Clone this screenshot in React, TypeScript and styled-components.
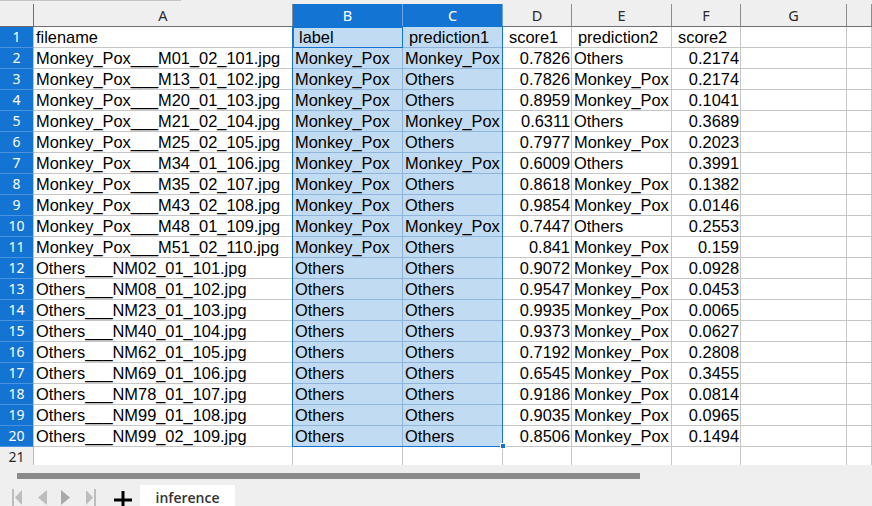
import React from "react";
import styled, { createGlobalStyle } from "styled-components";

const GlobalStyle = createGlobalStyle`
  html, body { margin: 0; padding: 0; background: #efefef; overflow: hidden; }
  * { box-sizing: border-box; }
`;

const BLUE = "#1474d4";
const COLS = [34, 259, 110, 100, 69, 100, 69, 106];

const Window = styled.div`
  width: 872px;
  height: 506px;
  display: flex;
  flex-direction: column;
  background: #efefef;
  overflow: hidden;
`;

const TopStrip = styled.div`
  height: 4px;
  background: #efefef;
`;

const NameBoxEdge = styled.div`
  width: 181px;
  height: 1px;
  background: #c4c4c4;
`;

const Sheet = styled.div`
  position: relative;
  height: 461px;
  overflow: hidden;
  display: grid;
  grid-template-columns: ${COLS.map((c) => c + "px").join(" ")} 1fr;
  grid-template-rows: 23px;
  grid-auto-rows: 21px;
  background: #fff;
`;

const Corner = styled.div`
  background: #efefef;
  border-right: 1px solid #6f6f6f;
  border-bottom: 1px solid #6f6f6f;
`;

const ColHeader = styled.div<{ $selected?: boolean }>`
  background: ${(p) => (p.$selected ? BLUE : "#efefef")};
  color: ${(p) => (p.$selected ? "#fff" : "#2b2b2b")};
  border-right: 1px solid ${(p) => (p.$selected ? "#6aa6e6" : "#8c8c8c")};
  border-bottom: 1px solid ${(p) => (p.$selected ? BLUE : "#6f6f6f")};
  font-family: "Noto Sans", "Open Sans", sans-serif;
  font-size: 14.5px;
  line-height: 22px;
  text-align: center;
`;

const RowHeader = styled.div<{ $selected?: boolean }>`
  background: ${(p) => (p.$selected ? BLUE : "#efefef")};
  color: ${(p) => (p.$selected ? "#fff" : "#2b2b2b")};
  border-right: 1px solid ${(p) => (p.$selected ? "#a9c8ea" : "#bdbdbd")};
  border-bottom: 1px solid ${(p) => (p.$selected ? "#4a93de" : "#c8c8c8")};
  font-family: "Noto Sans", "Open Sans", sans-serif;
  font-size: 14px;
  line-height: 20px;
  text-align: center;
`;

const Cell = styled.div<{ $selected?: boolean; $num?: boolean; $indent?: boolean }>`
  background: ${(p) => (p.$selected ? "#c1dbf3" : "#fff")};
  border-right: 1px solid ${(p) => (p.$selected ? "#8fb5dc" : "#c6c6c6")};
  border-bottom: 1px solid ${(p) => (p.$selected ? "#8fb5dc" : "#c6c6c6")};
  font-family: "Liberation Sans", Arial, sans-serif;
  font-size: 16.4px;
  line-height: 20px;
  color: #000;
  white-space: nowrap;
  overflow: hidden;
  text-align: ${(p) => (p.$num ? "right" : "left")};
  padding: ${(p) => (p.$num ? "0 1px 0 0" : p.$indent ? "0 0 0 6px" : "0 0 0 2px")};
`;

const SelectionBox = styled.div`
  position: absolute;
  left: 292px;
  top: 22px;
  width: 211px;
  height: 421px;
  border: 1px solid ${BLUE};
  pointer-events: none;
`;

const ActiveCell = styled.div`
  position: absolute;
  left: 293px;
  top: 23px;
  width: 110px;
  height: 21px;
  border: 1px solid ${BLUE};
  pointer-events: none;
`;

const FillHandle = styled.div`
  position: absolute;
  left: 500px;
  top: 439px;
  width: 6px;
  height: 6px;
  background: ${BLUE};
  border: 1px solid #fff;
`;

const Bottom = styled.div`
  flex: 1;
  display: flex;
  flex-direction: column;
  background: #efefef;
`;

const ScrollTrack = styled.div`
  height: 20px;
  padding: 8px 0 0 17px;
`;

const ScrollThumb = styled.div`
  width: 623px;
  height: 6px;
  background: #8a8a8a;
`;

const TabBar = styled.div`
  flex: 1;
  display: flex;
  align-items: flex-start;
  padding-left: 12px;
`;

const NavButton = styled.div`
  width: 24.5px;
  height: 21px;
  padding-top: 3px;
  display: flex;
  justify-content: flex-start;
`;

const AddButton = styled.div`
  width: 30px;
  height: 21px;
  padding: 6px 0 0 4px;
`;

const Tab = styled.div`
  width: 95px;
  height: 21px;
  background: #fff;
  font-family: "Open Sans", "Noto Sans", sans-serif;
  font-weight: 600;
  font-size: 14px;
  line-height: 26px;
  color: #333;
  text-align: center;
`;

type Row = [string, string, string, string, string, string];

const MP = "Monkey_Pox";
const OT = "Others";

const rows: Row[] = [
  ["filename", "label", "prediction1", "score1", "prediction2", "score2"],
  ["Monkey_Pox___M01_02_101.jpg", MP, MP, "0.7826", OT, "0.2174"],
  ["Monkey_Pox___M13_01_102.jpg", MP, OT, "0.7826", MP, "0.2174"],
  ["Monkey_Pox___M20_01_103.jpg", MP, OT, "0.8959", MP, "0.1041"],
  ["Monkey_Pox___M21_02_104.jpg", MP, MP, "0.6311", OT, "0.3689"],
  ["Monkey_Pox___M25_02_105.jpg", MP, OT, "0.7977", MP, "0.2023"],
  ["Monkey_Pox___M34_01_106.jpg", MP, MP, "0.6009", OT, "0.3991"],
  ["Monkey_Pox___M35_02_107.jpg", MP, OT, "0.8618", MP, "0.1382"],
  ["Monkey_Pox___M43_02_108.jpg", MP, OT, "0.9854", MP, "0.0146"],
  ["Monkey_Pox___M48_01_109.jpg", MP, MP, "0.7447", OT, "0.2553"],
  ["Monkey_Pox___M51_02_110.jpg", MP, OT, "0.841", MP, "0.159"],
  ["Others___NM02_01_101.jpg", OT, OT, "0.9072", MP, "0.0928"],
  ["Others___NM08_01_102.jpg", OT, OT, "0.9547", MP, "0.0453"],
  ["Others___NM23_01_103.jpg", OT, OT, "0.9935", MP, "0.0065"],
  ["Others___NM40_01_104.jpg", OT, OT, "0.9373", MP, "0.0627"],
  ["Others___NM62_01_105.jpg", OT, OT, "0.7192", MP, "0.2808"],
  ["Others___NM69_01_106.jpg", OT, OT, "0.6545", MP, "0.3455"],
  ["Others___NM78_01_107.jpg", OT, OT, "0.9186", MP, "0.0814"],
  ["Others___NM99_01_108.jpg", OT, OT, "0.9035", MP, "0.0965"],
  ["Others___NM99_02_109.jpg", OT, OT, "0.8506", MP, "0.1494"],
];

const letters = ["A", "B", "C", "D", "E", "F", "G", ""];
const numCols = new Set([3, 5]);

const Arrow: React.FC<{ dir: "first" | "prev" | "next" | "last"; color: string }> = ({ dir, color }) => (
  <svg width="11" height="18" viewBox="0 0 11 18">
    {dir === "first" && (
      <>
        <rect x="0" y="1" width="2" height="17" fill={color} />
        <polygon points="10,2 3,9.5 10,17" fill={color} />
      </>
    )}
    {dir === "prev" && <polygon points="10,2 1,9.5 10,17" fill={color} />}
    {dir === "next" && <polygon points="0,2 9,9.5 0,17" fill={color} />}
    {dir === "last" && (
      <>
        <polygon points="0,2 7,9.5 0,17" fill={color} />
        <rect x="8" y="1" width="2" height="17" fill={color} />
      </>
    )}
  </svg>
);

export default function App() {
  return (
    <>
      <GlobalStyle />
      <Window>
        <TopStrip>
          <NameBoxEdge />
        </TopStrip>
        <Sheet>
          <Corner />
          {letters.map((l, i) => (
            <ColHeader key={"h" + i} $selected={i === 1 || i === 2}>
              {l}
            </ColHeader>
          ))}
          {rows.map((r, ri) => (
            <React.Fragment key={"r" + ri}>
              <RowHeader $selected>{ri + 1}</RowHeader>
              {r.map((v, ci) => (
                <Cell
                  key={ci}
                  $selected={ci === 1 || ci === 2}
                  $num={ri > 0 && numCols.has(ci)}
                  $indent={ri === 0 && ci > 0}
                >
                  {v}
                </Cell>
              ))}
              <Cell />
              <Cell />
            </React.Fragment>
          ))}
          <RowHeader>21</RowHeader>
          {letters.map((_, i) => (
            <Cell key={"e" + i} />
          ))}
          <SelectionBox />
          <ActiveCell />
          <FillHandle />
        </Sheet>
        <Bottom>
          <ScrollTrack>
            <ScrollThumb />
          </ScrollTrack>
          <TabBar>
            <NavButton>
              <Arrow dir="first" color="#bdbdbd" />
            </NavButton>
            <NavButton>
              <Arrow dir="prev" color="#bdbdbd" />
            </NavButton>
            <NavButton>
              <Arrow dir="next" color="#a9a9a9" />
            </NavButton>
            <NavButton>
              <Arrow dir="last" color="#bdbdbd" />
            </NavButton>
            <AddButton>
              <svg width="18" height="18" viewBox="0 0 18 18">
                <rect x="0" y="7.5" width="18" height="3" fill="#000" />
                <rect x="7.5" y="0" width="3" height="18" fill="#000" />
              </svg>
            </AddButton>
            <Tab>inference</Tab>
          </TabBar>
        </Bottom>
      </Window>
    </>
  );
}
